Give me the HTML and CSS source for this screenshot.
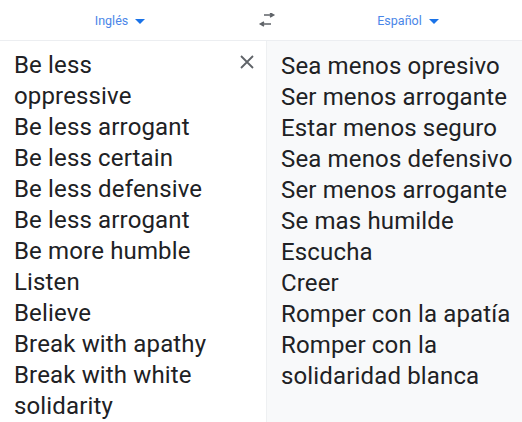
FILE: index.html
```html
<!DOCTYPE html>
<html>
<head>
<meta charset="utf-8">
<link rel="stylesheet" href="styles.css">
</head>
<body>
<div class="app">
  <header class="bar">
    <div class="lang"><span>Inglés</span><span class="caret"></span></div>
    <div class="swap">
      <svg width="18" height="16" viewBox="0 0 18 16"><path d="M6 2h9M12 0l3.5 2L12 4" fill="none" stroke="#5f6368" stroke-width="1.6"/><path d="M3 11h10M6 9l-3.5 2L6 13" fill="none" stroke="#5f6368" stroke-width="1.6"/></svg>
    </div>
    <div class="lang"><span>Español</span><span class="caret"></span></div>
  </header>
  <main class="panes">
    <section class="pane src">
      <div class="text">Be less<br>oppressive<br>Be less arrogant<br>Be less certain<br>Be less defensive<br>Be less arrogant<br>Be more humble<br>Listen<br>Believe<br>Break with apathy<br>Break with white<br>solidarity</div>
      <button class="close" aria-label="Clear"><svg width="14" height="14" viewBox="0 0 14 14"><path d="M1 1l12 12M13 1L1 13" stroke="#5f6368" stroke-width="1.8"/></svg></button>
    </section>
    <section class="pane dst">
      <div class="text">Sea menos opresivo<br>Ser menos arrogante<br>Estar menos seguro<br>Sea menos defensivo<br>Ser menos arrogante<br>Se mas humilde<br>Escucha<br>Creer<br>Romper con la apatía<br>Romper con la<br>solidaridad blanca</div>
    </section>
  </main>
</div>
</body>
</html>
```
FILE: styles.css
```css
html, body { margin: 0; padding: 0; background: #fff; }
body { font-family: Roboto, "Open Sans", sans-serif; width: 522px; height: 422px; overflow: hidden; }
.app { display: flex; flex-direction: column; height: 422px; }
.bar { display: grid; grid-template-columns: 247px 40px 1fr; align-items: center; height: 41px; border-bottom: 1px solid #eceef1; box-sizing: border-box; }
.lang { display: flex; justify-content: center; align-items: center; gap: 7px; color: #4a86e8; font-size: 12.5px; }
.bar .lang:first-child { padding-right: 7px; }
.bar .lang:last-child { padding-left: 7px; }
.caret { width: 0; height: 0; border-left: 5px solid transparent; border-right: 5px solid transparent; border-top: 5px solid #1a73e8; margin-top: 2px; }
.swap { display: flex; justify-content: center; align-items: center; padding-top: 1px; }
.panes { display: grid; grid-template-columns: 266px 1fr; flex: 1; }
.pane { position: relative; }
.dst { background: #f8f9fa; border-left: 1px solid #eef0f2; }
.text { font-size: 24px; line-height: 31px; color: #202124; letter-spacing: 0.15px; }
.src .text { padding: 9px 0 0 14px; }
.dst .text { padding: 10px 0 0 14px; }
.close { position: absolute; top: 14px; right: 12px; background: none; border: 0; padding: 0; width: 14px; height: 14px; display: block; }
```
